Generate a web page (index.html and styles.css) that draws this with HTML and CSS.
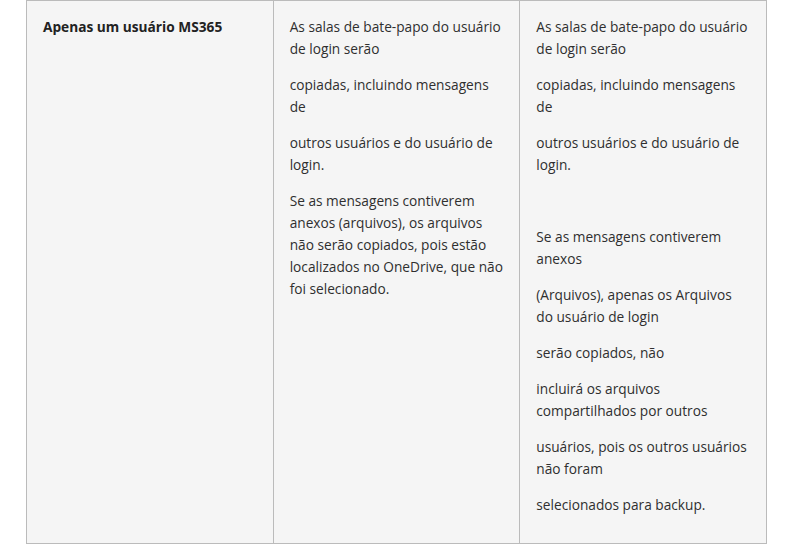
FILE: index.html
```html
<!DOCTYPE html>
<html lang="pt">
<head>
<meta charset="utf-8">
<link rel="stylesheet" href="styles.css">
</head>
<body>
<table class="grid">
  <tr>
    <td class="head"><strong>Apenas um usuário MS365</strong></td>
    <td class="mid">
      <p>As salas de bate-papo do usuário de login serão</p>
      <p>copiadas, incluindo mensagens de</p>
      <p>outros usuários e do usuário de login.</p>
      <p>Se as mensagens contiverem anexos (arquivos), os arquivos não serão copiados, pois estão localizados no OneDrive, que não foi selecionado.</p>
    </td>
    <td>
      <p>As salas de bate-papo do usuário de login serão</p>
      <p>copiadas, incluindo mensagens de</p>
      <p>outros usuários e do usuário de login.</p>
      <p>&nbsp;</p>
      <p>Se as mensagens contiverem anexos</p>
      <p>(Arquivos), apenas os Arquivos do usuário de login</p>
      <p>serão copiados, não</p>
      <p>incluirá os arquivos compartilhados por outros</p>
      <p>usuários, pois os outros usuários não foram</p>
      <p>selecionados para backup.</p>
    </td>
  </tr>
</table>
</body>
</html>
```
FILE: styles.css
```css
html, body {
  margin: 0;
  padding: 0;
  background: #ffffff;
}
body {
  font-family: "Open Sans", "Noto Sans", sans-serif;
  font-size: 13.7px;
  color: #2f2f2f;
}
.grid {
  margin-left: 26px;
  width: 741px;
  border-collapse: collapse;
  table-layout: fixed;
  background: #f5f5f5;
}
.grid td {
  border: 1px solid #bbbbbb;
  vertical-align: top;
  padding: 15px 16px 13px 16px;
  line-height: 22px;
}
.grid td.mid {
  padding-right: 14px;
}
.grid p {
  margin: 0 0 14px;
}
.head strong {
  color: #222222;
  font-weight: 700;
}
```
